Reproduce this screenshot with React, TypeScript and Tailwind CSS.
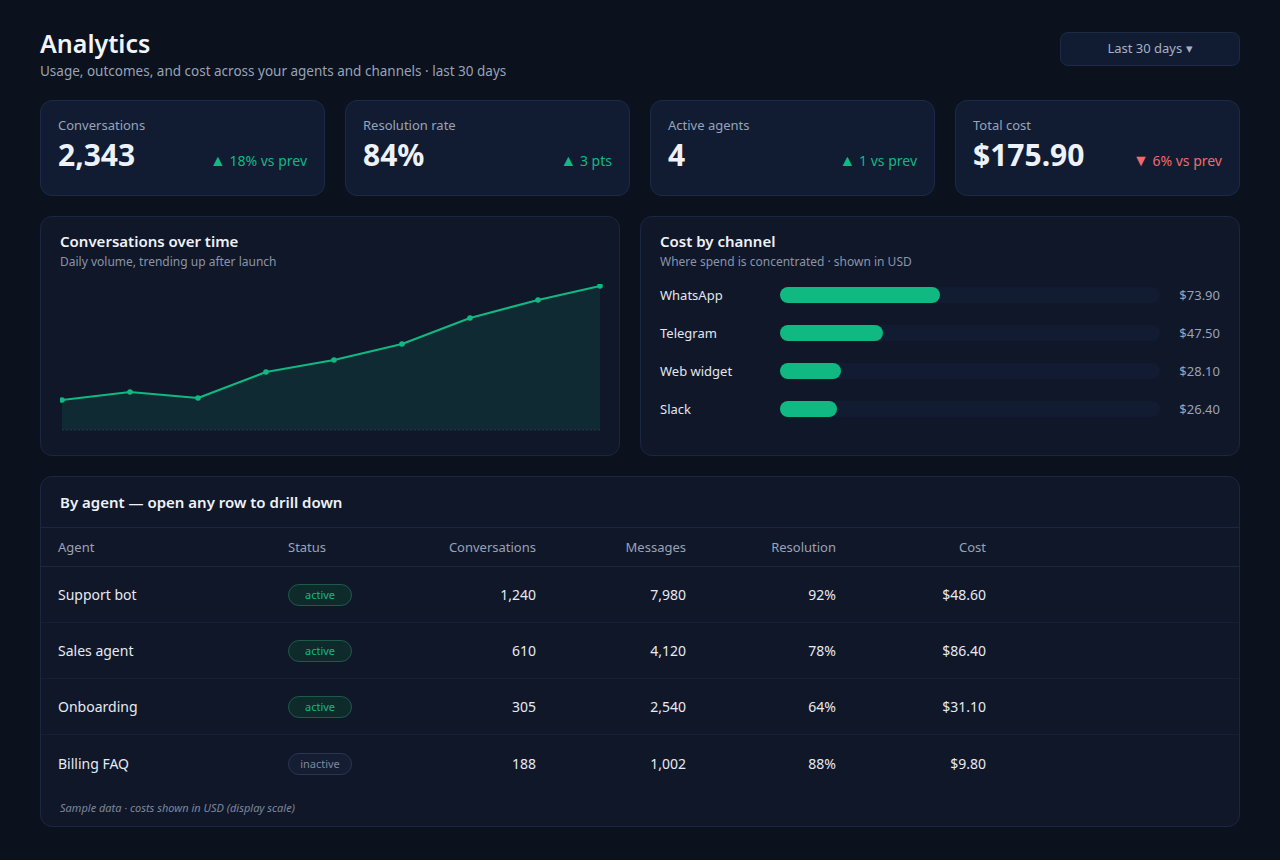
const kpis = [
  { label: 'Conversations', value: '2,343', delta: '18% vs prev', up: true },
  { label: 'Resolution rate', value: '84%', delta: '3 pts', up: true },
  { label: 'Active agents', value: '4', delta: '1 vs prev', up: true },
  { label: 'Total cost', value: '$175.90', delta: '6% vs prev', up: false },
];

const channels = [
  { name: 'WhatsApp', cost: 73.9 },
  { name: 'Telegram', cost: 47.5 },
  { name: 'Web widget', cost: 28.1 },
  { name: 'Slack', cost: 26.4 },
];
const totalCost = 175.9;

const agents = [
  { name: 'Support bot', active: true, convos: '1,240', messages: '7,980', resolution: '92%', cost: '$48.60' },
  { name: 'Sales agent', active: true, convos: '610', messages: '4,120', resolution: '78%', cost: '$86.40' },
  { name: 'Onboarding', active: true, convos: '305', messages: '2,540', resolution: '64%', cost: '$31.10' },
  { name: 'Billing FAQ', active: false, convos: '188', messages: '1,002', resolution: '88%', cost: '$9.80' },
];

// daily volume points, in chart pixel space (540 x 146)
const points: [number, number][] = [
  [2, 116], [70, 108], [138, 114], [206, 88], [274, 76], [342, 60], [410, 34], [478, 16], [540, 2],
];

function TrendChart() {
  const line = points.map(([x, y], i) => `${i ? 'L' : 'M'}${x} ${y}`).join(' ');
  const area = `${line} L540 146 L2 146 Z`;
  return (
    <svg width="544" height="150" viewBox="0 0 544 150" className="block">
      <path d={area} fill="#0f2a33" />
      <line x1="2" y1="146" x2="540" y2="146" stroke="#1e3a44" strokeDasharray="2 2" />
      <path d={line} fill="none" stroke="#10b981" strokeWidth="2.2" strokeLinejoin="round" />
      {points.map(([x, y]) => (
        <circle key={x} cx={x} cy={y} r="2.8" fill="#10b981" />
      ))}
    </svg>
  );
}

const cols = 'grid grid-cols-[230px_134px_150px_150px_150px_150px_1fr]';

export default function App() {
  return (
    <div className="min-h-screen bg-[#0b111d] px-10 pt-[29px] pb-8 text-[#e5e9f2] font-['Noto_Sans',sans-serif]">
      {/* Header */}
      <div className="flex items-start justify-between">
        <div>
          <h1 className="text-[25px] font-semibold leading-[28px] text-[#f1f4f9]">Analytics</h1>
          <p className="mt-[4px] text-[13.5px] text-[#98a3b8]">
            Usage, outcomes, and cost across your agents and channels · last 30 days
          </p>
        </div>
        <button className="mt-[3px] h-[34px] w-[180px] rounded-lg border border-[#1c2a45] bg-[#111c33] text-[13px] text-[#a7b1c4]">
          Last 30 days ▾
        </button>
      </div>

      {/* KPI cards */}
      <div className="mt-[19px] grid grid-cols-4 gap-5">
        {kpis.map((k) => (
          <div key={k.label} className="h-[96px] rounded-xl border border-[#1c2a45] bg-[#111c33] px-[17px] pt-[16px]">
            <div className="text-[13px] leading-[16px] text-[#98a3b8]">{k.label}</div>
            <div className="mt-[2px] flex items-baseline justify-between">
              <span className="text-[30px] font-bold leading-[40px] text-[#eef2f8]">{k.value}</span>
              <span className={`text-[14px] ${k.up ? 'text-[#10b981]' : 'text-[#f06a6a]'}`}>
                <span className="text-[16px]">{k.up ? '▲' : '▼'}</span> {k.delta}
              </span>
            </div>
          </div>
        ))}
      </div>

      {/* Charts */}
      <div className="mt-5 grid grid-cols-[580px_1fr] gap-5">
        <div className="h-[240px] rounded-xl border border-[#1b2740] bg-[#101729] px-[19px] pt-[14px]">
          <div className="text-[15px] font-semibold leading-[20px] text-[#eef2f8]">Conversations over time</div>
          <div className="mt-[2px] text-[12px] text-[#8a94a8]">Daily volume, trending up after launch</div>
          <div className="mt-[13px]">
            <TrendChart />
          </div>
        </div>

        <div className="h-[240px] rounded-xl border border-[#1b2740] bg-[#101729] px-[19px] pt-[14px]">
          <div className="text-[15px] font-semibold leading-[20px] text-[#eef2f8]">Cost by channel</div>
          <div className="mt-[2px] text-[12px] text-[#8a94a8]">Where spend is concentrated · shown in USD</div>
          <div className="mt-[16px] flex flex-col gap-[22px]">
            {channels.map((c) => (
              <div key={c.name} className="flex h-4 items-center">
                <span className="w-[120px] text-[13px] text-[#e1e6ef]">{c.name}</span>
                <div className="h-4 w-[380px] rounded-full bg-[#111c33]">
                  <div
                    className="h-4 rounded-full bg-[#10b981]"
                    style={{ width: `${(c.cost / totalCost) * 100}%` }}
                  />
                </div>
                <span className="flex-1 text-right text-[13px] text-[#98a3b8]">${c.cost.toFixed(2)}</span>
              </div>
            ))}
          </div>
        </div>
      </div>

      {/* Agents table */}
      <div className="mt-5 rounded-xl border border-[#1b2740] bg-[#101729]">
        <div className="h-[51px] border-b border-[#1b2740] px-[19px] pt-[15px] text-[15px] font-semibold leading-[20px] text-[#eef2f8]">
          By agent — open any row to drill down
        </div>
        <div className={`${cols} h-[39px] items-center border-b border-[#1b2740] text-[13px] text-[#98a3b8]`}>
          <div className="px-[17px]">Agent</div>
          <div className="px-[17px]">Status</div>
          <div className="px-[19px] text-right">Conversations</div>
          <div className="px-[19px] text-right">Messages</div>
          <div className="px-[19px] text-right">Resolution</div>
          <div className="px-[19px] text-right">Cost</div>
          <div />
        </div>
        {agents.map((a, i) => (
          <div
            key={a.name}
            className={`${cols} h-[56px] items-center text-[14px] text-[#e6eaf2] ${
              i < agents.length - 1 ? 'border-b border-[#161f35]' : ''
            }`}
          >
            <div className="px-[17px]">{a.name}</div>
            <div className="px-[17px]">
              {a.active ? (
                <span className="inline-flex h-[22px] w-16 items-center justify-center rounded-full border border-[#1d5a4a] bg-[#0f2a2b] text-[11px] text-[#10b981]">
                  active
                </span>
              ) : (
                <span className="inline-flex h-[22px] w-16 items-center justify-center rounded-full border border-[#2a3650] bg-[#141d31] text-[11px] text-[#7d879b]">
                  inactive
                </span>
              )}
            </div>
            <div className="px-[19px] text-right">{a.convos}</div>
            <div className="px-[19px] text-right">{a.messages}</div>
            <div className="px-[19px] text-right">{a.resolution}</div>
            <div className="px-[19px] text-right">{a.cost}</div>
            <div />
          </div>
        ))}
        <div className="px-[19px] pt-[9px] pb-[10px] text-[11px] leading-[16px] italic text-[#7d879b]">
          Sample data · costs shown in USD (display scale)
        </div>
      </div>
    </div>
  );
}
